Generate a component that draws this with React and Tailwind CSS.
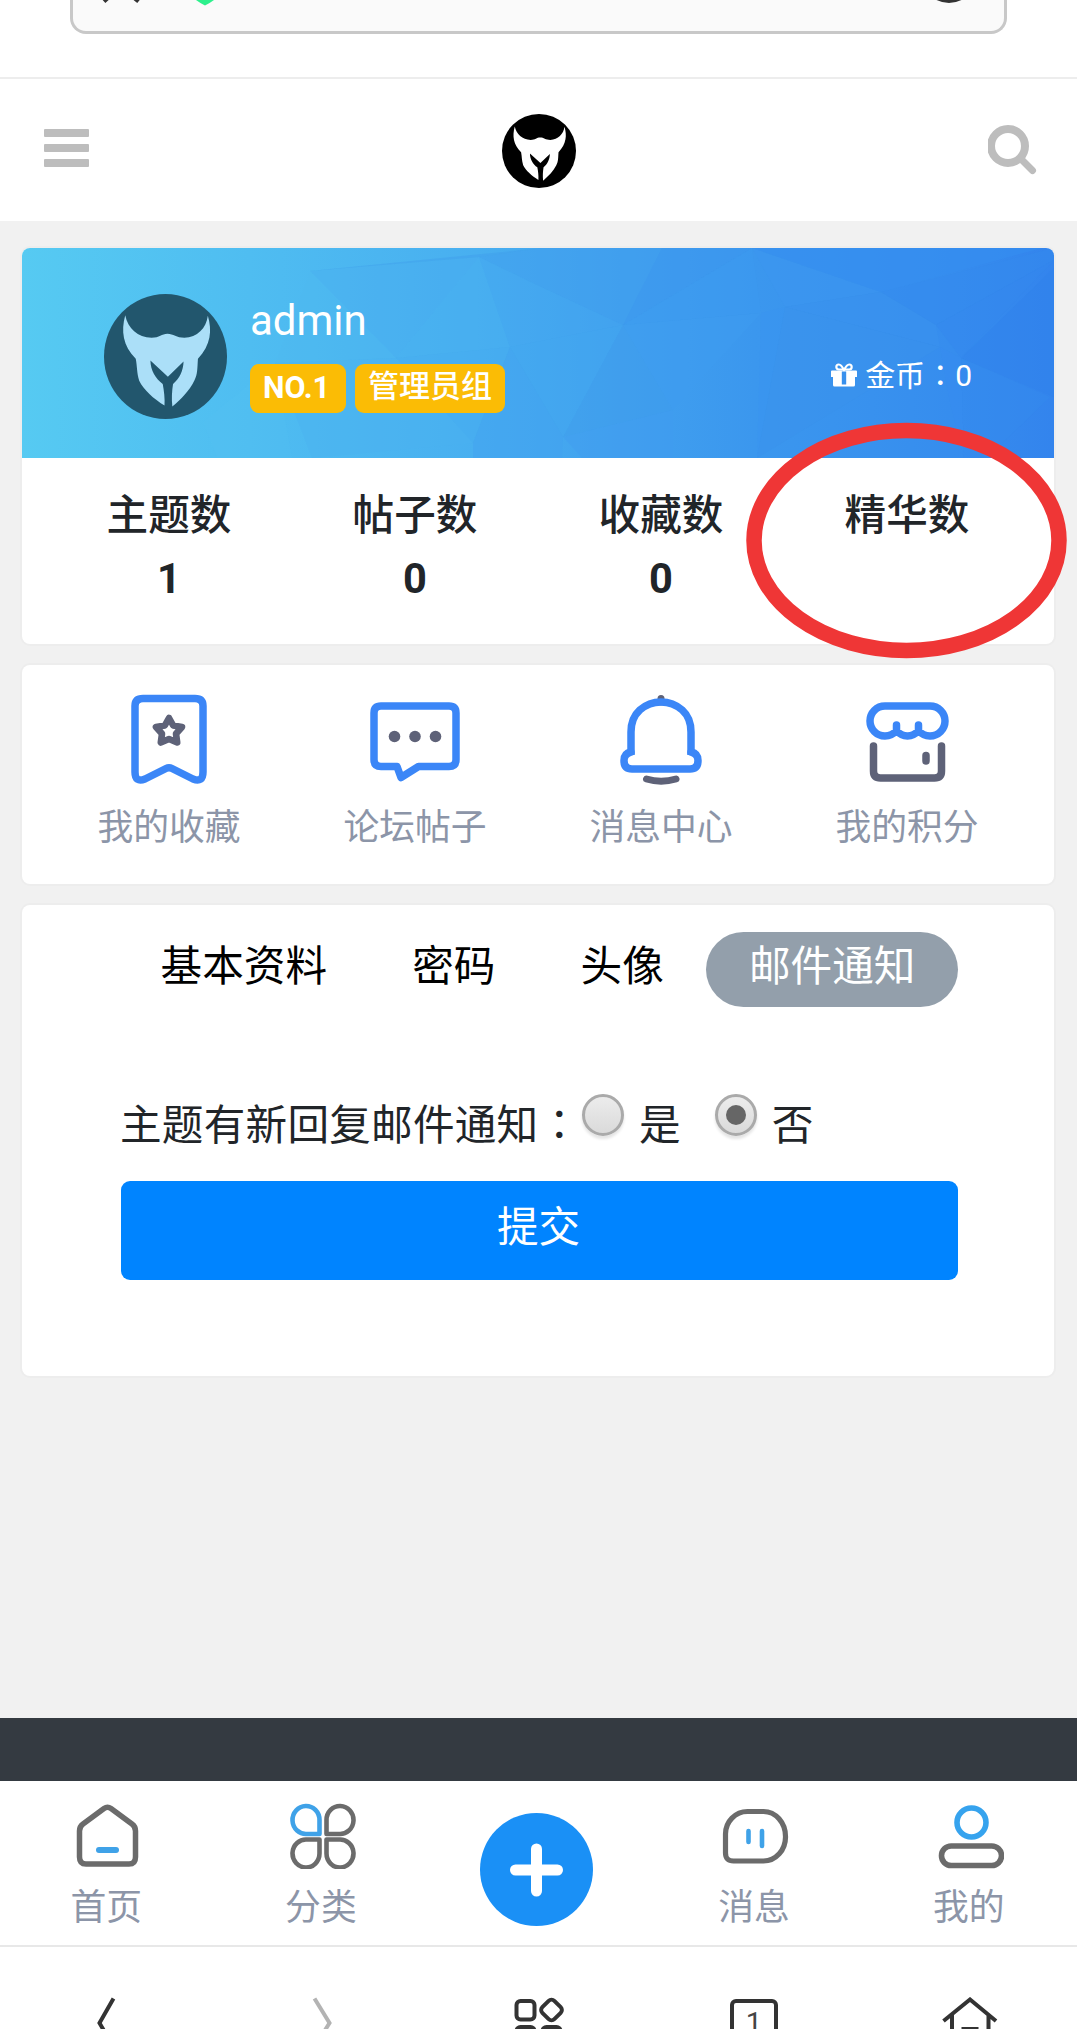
// src/pages/UserNoticeSettings.jsx
import React, { useState } from 'react';

const stats = [
  { label: '主题数', value: '1' },
  { label: '帖子数', value: '0' },
  { label: '收藏数', value: '0' },
  { label: '精华数', value: '' },
];

const tabs = ['基本资料', '密码', '头像', '邮件通知'];

// Low-poly facets of the profile banner
const facets = [
  { points: '288,23 457,9 374,110', fill: '#46a9ef', opacity: 0.25 },
  { points: '288,23 520,0 457,9', fill: '#3f9cea', opacity: 0.4 },
  { points: '457,9 520,0 640,0 601,77 515,37', fill: '#3f9eed', opacity: 0.5 },
  { points: '457,9 488,99 374,110', fill: '#49aef0', opacity: 0.4 },
  { points: '253,115 288,23 374,110', fill: '#50bbf2', opacity: 0.2 },
  { points: '253,115 374,110 451,195 290,210', fill: '#4ab2ef', opacity: 0.4 },
  { points: '181,174 253,115 270,210 195,210', fill: '#53c4f3', opacity: 0.2 },
  { points: '374,110 488,99 451,195', fill: '#46abef', opacity: 0.5 },
  { points: '457,9 515,37 601,77 488,99', fill: '#43a6f0', opacity: 0.4 },
  { points: '488,99 601,77 541,189', fill: '#42a5f0', opacity: 0.5 },
  { points: '488,99 541,189 540,210 451,210 451,195', fill: '#42a2f0', opacity: 0.5 },
  { points: '601,77 651,162 541,189', fill: '#3e9bec', opacity: 0.4 },
  { points: '640,0 730,0 601,77', fill: '#3b96ed', opacity: 0.5 },
  { points: '601,77 730,0 739,65', fill: '#3c99f0', opacity: 0.5 },
  { points: '601,77 739,65 651,162', fill: '#3e9cf0', opacity: 0.5 },
  { points: '541,189 651,162 651,210 560,210', fill: '#409cef', opacity: 0.4 },
  { points: '730,0 859,44 763,59', fill: '#3c95f0', opacity: 0.5 },
  { points: '730,0 1020,0 859,44', fill: '#358df0', opacity: 0.6 },
  { points: '739,65 763,59 735,210', fill: '#3a94ef', opacity: 0.4 },
  { points: '763,59 859,44 914,77 918,99', fill: '#3992ee', opacity: 0.5 },
  { points: '763,59 918,99 735,210', fill: '#3992ec', opacity: 0.5 },
  { points: '859,44 1032,0 1032,12 914,77', fill: '#3389ee', opacity: 0.5 },
  { points: '914,77 1032,12 939,110', fill: '#3387ee', opacity: 0.5 },
  { points: '918,99 939,110 942,210 928,155', fill: '#388df0', opacity: 0.4 },
  { points: '939,110 1032,20 1032,149', fill: '#3082ec', opacity: 0.5 },
  { points: '939,110 1028,149 965,210 942,210', fill: '#3489ee', opacity: 0.5 },
];

function BullLogo({ className, circle, face }) {
  return (
    <svg viewBox="0 0 124 124" preserveAspectRatio="none" className={className}>
      <circle cx="62" cy="62" r="62" fill={circle} />
      <path
        fill={face}
        d="M21.4 21C24 34 34 43 48 43.5C56 43.5 58 39.5 64 39.5C70 39.5 73 43.5 81 43.5C94 43 103 34 104.700 21.500C109 36 108 50 94.700 64.300C94 74 94.500 80 91 86C86 96 78 104 68.900 111.700C68 104 68.500 96 69.600 89.300C76 84 80 76 80.200 67L64.400 82L46.800 66C47 76 52 84 59.200 89.300C60.500 96 61.500 104 61 110.500C50 104 40 95 35.500 86C33 78 33.500 72 32 64.300C19 51 17 37 21.400 21Z"
      />
    </svg>
  );
}

function GiftIcon({ className }) {
  return (
    <svg width="26" height="24" viewBox="0 0 26 24" className={className}>
      <path d="M0 8.500Q0 7.500 1 7.500H25Q26 7.500 26 8.500V14H0ZM2 13H24V22Q24 23.500 22.500 23.500H3.500Q2 23.500 2 22Z" fill="currentColor" />
      <path d="M13 7C11 3 9.500 1.500 7.800 1.500C4.500 1.500 4.500 6.500 7.800 6.500H18.200C21.500 6.500 21.500 1.500 18.200 1.500C16.500 1.500 15 3 13 7Z" fill="none" stroke="currentColor" strokeWidth="2.200" />
      <path d="M10.800 8.500H15.200V21.500H10.800Z" fill="#3890ed" />
    </svg>
  );
}

function BookmarkIcon() {
  return (
    <svg width="76" height="90" viewBox="0 0 76 90" fill="none" strokeLinejoin="round">
      <path d="M4 12Q4 4.500 12 4.500H64Q72 4.500 72 12V78Q72 89 62 85L41 74.500Q38 73 35 74.500L14 85Q4 89 4 78Z" stroke="#3b86f7" strokeWidth="7.500" />
      <path d="M38 24L42.200 31.500L51 33L45 39.800L46.200 48.500L38 45L29.800 48.500L31 39.800L25 33L33.800 31.500Z" stroke="#5e6278" strokeWidth="6.600" />
    </svg>
  );
}

function ChatIcon() {
  return (
    <svg width="90" height="90" viewBox="0 0 90 90" fill="none" strokeLinejoin="round">
      <path d="M11 12H79Q86 12 86 19V65.500Q86 72.500 79 72.500H48.500L31 83.500L27 72.500H11Q4 72.500 4 65.500V19Q4 12 11 12Z" stroke="#3b86f7" strokeWidth="7.500" />
      <circle cx="24.500" cy="42.500" r="5.800" fill="#5e6278" />
      <circle cx="45" cy="42.500" r="5.800" fill="#5e6278" />
      <circle cx="65.500" cy="42.500" r="5.800" fill="#5e6278" />
    </svg>
  );
}

function BellIcon() {
  return (
    <svg width="82" height="91" viewBox="0 0 82 91" fill="none" strokeLinecap="round">
      <path d="M41 4.500V8" stroke="#5e6278" strokeWidth="7" />
      <path d="M11 61V38Q11 24 19.800 16Q29 8 41 8Q53 8 62.200 16Q71 24 71 38V61" stroke="#3b86f7" strokeWidth="7.500" strokeLinecap="butt" />
      <path d="M11 58Q4 59.500 4 66.500Q4 75 12 75H70Q78 75 78 66.500Q78 59.500 71 58" stroke="#3b86f7" strokeWidth="7.500" />
      <path d="M26.500 85Q41 89.500 56 85" stroke="#5e6278" strokeWidth="7" />
      <path d="M14 62H68" stroke="#fff" strokeWidth="1" />
    </svg>
  );
}

function ShopIcon() {
  return (
    <svg width="83" height="90" viewBox="0 0 83 90" fill="none" strokeLinecap="round">
      <path d="M7.500 52V77Q7.500 84 14.500 84H68.500Q75.500 84 75.500 77V52M60 61.500V67" stroke="#5e6278" strokeWidth="7.500" />
      <path d="M19 12H64A15 15 0 0 1 64 42Q57 42 52.500 36.500Q48 42 41.500 42Q35 42 30.500 36.500Q26 42 19 42A15 15 0 0 1 19 12ZM30.500 31V37M52.500 31V37" stroke="#3b86f7" strokeWidth="7.500" />
    </svg>
  );
}

function HomeIcon() {
  return (
    <svg width="68" height="66" viewBox="-0.500 0 68 66" fill="none" strokeLinecap="round" strokeLinejoin="round">
      <path d="M30.500 5.500Q34 3 37.500 5.500L58.500 21Q62 23.500 62 28V54Q62 61 55.500 61H12.500Q6 61 6 54V28Q6 23.500 9.500 21Z" stroke="#6b6b6b" strokeWidth="5.500" />
      <path d="M25.500 47H42.500" stroke="#3fa2e8" strokeWidth="6" />
    </svg>
  );
}

function CategoryIcon() {
  return (
    <svg width="68" height="66" viewBox="-1 -0.500 68 66" fill="none" strokeWidth="4.600" strokeLinejoin="round">
      <path d="M30.500 30.500H18A13.500 14 0 1 1 30.500 16.500Z" stroke="#3fa2e8" />
      <path d="M37.500 30.500H50A13.500 14 0 1 0 37.500 16.500Z" stroke="#6b6b6b" />
      <path d="M30.500 36H18A13.500 14 0 1 0 30.500 50Z" stroke="#6b6b6b" />
      <path d="M37.500 36H50A13.500 14 0 1 1 37.500 50Z" stroke="#6b6b6b" />
    </svg>
  );
}

function MessageIcon() {
  return (
    <svg width="68" height="66" viewBox="-0.500 -1 68 66" fill="none" strokeLinecap="round">
      <path d="M26 7.500H42A22 25 0 0 1 64 32.500A22 24 0 0 1 42 57H12Q4 57 4 49V30A22 22.500 0 0 1 26 7.500Z" stroke="#6b6b6b" strokeWidth="5.200" />
      <path d="M27 27V38M40.500 27V42" stroke="#3fa2e8" strokeWidth="4.600" />
    </svg>
  );
}

function UserIcon() {
  return (
    <svg width="68" height="66" viewBox="-1.500 0 68 66" fill="none">
      <circle cx="34" cy="19.500" r="14.500" stroke="#36a3ee" strokeWidth="5.600" />
      <rect x="4" y="43" width="60" height="19.500" rx="9.700" stroke="#6b6b6b" strokeWidth="5.600" />
    </svg>
  );
}

const shortcuts = [
  { label: '我的收藏', Icon: BookmarkIcon },
  { label: '论坛帖子', Icon: ChatIcon },
  { label: '消息中心', Icon: BellIcon },
  { label: '我的积分', Icon: ShopIcon },
];

function AddressBar() {
  return (
    <div className="h-[79px] border-b-2 border-[#ededed] px-[70px]">
      <div className="flex h-[34px] items-start overflow-hidden rounded-b-[16px] border-x-3 border-b-3 border-[#c8c8c8] bg-[#fafafa]">
        <svg width="930" height="10" viewBox="73 0 930 10">
          <path d="M104 1.500L109 -3M138.500 1.500L133 -3" stroke="#333" strokeWidth="4" />
          <path d="M196 0H214Q210 3 205 5.500Q200 3 196 0Z" fill="#2df08c" />
          <path d="M936 -2.500Q949 4.500 962 -2.500" stroke="#333" strokeWidth="4" fill="none" />
        </svg>
      </div>
    </div>
  );
}

function SiteHeader() {
  return (
    <header className="flex h-[142px] items-start justify-between bg-white pl-[44px] pr-[39px]">
      <button className="mt-[50px] flex w-[45px] flex-col gap-[7px]">
        <span className="h-2 rounded-[1px] bg-[#bdbdbd]" />
        <span className="h-2 rounded-[1px] bg-[#bdbdbd]" />
        <span className="h-2 rounded-[1px] bg-[#bdbdbd]" />
      </button>
      <BullLogo className="mt-[35px] size-[74px]" circle="#000" face="#fff" />
      <svg width="50" height="50" viewBox="0 0 50 50" fill="none" stroke="#bdbdbd" className="mt-[46px]">
        <circle cx="20" cy="21" r="17" strokeWidth="8" />
        <path d="M33 34L44.500 45.500" strokeWidth="7" strokeLinecap="round" />
      </svg>
    </header>
  );
}

function ProfileCard() {
  return (
    <section className="relative h-[396px] rounded-lg bg-white shadow-[0_0_0_2px_#ededed]">
      <div className="relative h-[210px] overflow-hidden rounded-t-lg bg-[linear-gradient(to_right,#56caf2,#4fbdf1_22%,#48aff0_44%,#41a1ef_58%,#3b97ee_71%,#368dee_90%,#3384ed)]">
        <svg viewBox="0 0 1032 210" preserveAspectRatio="none" className="absolute inset-0 size-full">
          {facets.map((facet) => (
            <polygon key={facet.points} points={facet.points} fill={facet.fill} opacity={facet.opacity} />
          ))}
        </svg>
        <div className="relative flex h-full items-start pl-[82px] pr-[82px] text-white">
          <BullLogo className="mt-[46px] h-[125px] w-[123px]" circle="#22566d" face="#abdff8" />
          <div className="ml-[23px] mt-[46px]">
            <div className="h-[50px] text-[42px] leading-[53px]">admin</div>
            <div className="mt-[20px] flex gap-[9px] text-[30.500px]">
              <span className="h-[49px] w-[96px] rounded-[9px] bg-[#fbbc05] pr-[3px] text-center font-bold leading-[47px]">NO.1</span>
              <span className="h-[49px] w-[150px] rounded-[9px] bg-[#fbbc05] text-center text-[31px] font-medium leading-[46px]">管理员组</span>
            </div>
          </div>
          <div className="ml-auto mt-[104px] flex text-[30px] leading-[47px]">
            <GiftIcon className="mr-[8px] mt-[11px]" />
            <span>金币</span>
            <span className="font-['Noto_Sans_CJK_TC',sans-serif] leading-[43px]">：</span>
            <span>0</span>
          </div>
        </div>
      </div>
      <div className="grid grid-cols-4 px-6 pt-[27px] text-center text-[41.600px] text-[#212529]">
        {stats.map((item) => (
          <div key={item.label}>
            <div className="h-[62px] font-medium leading-[62px]">{item.label}</div>
            <div className="h-[64px] font-bold leading-[64px]">{item.value}</div>
          </div>
        ))}
      </div>
      {/* Hand-drawn marker around the empty counter */}
      <svg width="322" height="238" viewBox="0 0 322 238" className="absolute left-[724px] top-[174px] z-10">
        <ellipse cx="160.500" cy="118.500" rx="152.500" ry="110" fill="none" stroke="#ef3636" strokeWidth="15.500" />
      </svg>
    </section>
  );
}

function ShortcutCard() {
  return (
    <section className="mt-[21px] grid h-[219px] grid-cols-4 rounded-lg bg-white px-6 pt-[29px] shadow-[0_0_0_2px_#ededed]">
      {shortcuts.map(({ label, Icon }) => (
        <a key={label} className="flex flex-col items-center">
          <div className="h-[91px]">
            <Icon />
          </div>
          <span className="mt-[16px] text-[35.800px] leading-[54px] text-[#8c95a8]">{label}</span>
        </a>
      ))}
    </section>
  );
}

function Radio({ checked, onClick }) {
  return (
    <button
      onClick={onClick}
      className="flex size-[42px] items-center justify-center rounded-full border-3 border-[#aaa] bg-linear-to-b from-[#ececec] to-[#dadada] shadow-[0_3px_3px_#e4e4e4]"
    >
      {checked && <span className="size-5 rounded-full bg-[#666]" />}
    </button>
  );
}

function SettingsCard() {
  const [active, setActive] = useState('邮件通知');
  const [notify, setNotify] = useState(false);

  return (
    <section className="mt-[21px] h-[471px] rounded-lg bg-white pl-[99px] pr-[96px] pt-[27px] text-[41.600px] shadow-[0_0_0_2px_#ededed]">
      <nav className="-ml-[3px] flex">
        {tabs.map((tab) => (
          <button
            key={tab}
            onClick={() => setActive(tab)}
            className={`h-[75px] rounded-full px-[42.600px] pb-[5px] leading-[70px] whitespace-nowrap ${
              active === tab ? 'bg-[#939fab] text-white' : 'text-black'
            }`}
          >
            {tab}
          </button>
        ))}
      </nav>
      <div className="mt-[87px] flex h-[62px] items-start leading-[63px] text-[#212529]">
        <span className="-ml-px tracking-[0.250px]">主题有新回复邮件通知</span>
        <span className="font-['Noto_Sans_CJK_TC',sans-serif] leading-[56px]">：</span>
        <div className="ml-[2px] flex">
          <Radio checked={notify} onClick={() => setNotify(true)} />
          <span className="ml-[15px]">是</span>
        </div>
        <div className="ml-[34px] flex">
          <Radio checked={!notify} onClick={() => setNotify(false)} />
          <span className="ml-[15px]">否</span>
        </div>
      </div>
      <button className="mt-[25px] h-[99px] w-full rounded-[9px] bg-[#0084ff] pb-[4px] pr-[2px] text-white">提交</button>
    </section>
  );
}

function NavItem({ label, Icon }) {
  return (
    <a className="flex flex-1 flex-col items-center pt-[22px]">
      <Icon />
      <span className="mt-[12px] pr-[2px] text-[35.800px] leading-[54px] text-[#8c95a8]">{label}</span>
    </a>
  );
}

function TabBar() {
  return (
    <nav className="flex h-[166px] border-b-2 border-[#e8e8e8] bg-white">
      <NavItem label="首页" Icon={HomeIcon} />
      <NavItem label="分类" Icon={CategoryIcon} />
      <div className="flex flex-1 justify-center pr-[4px] pt-[32px]">
        <svg width="113" height="113" viewBox="0 0 113 113">
          <circle cx="56.500" cy="56.500" r="56.500" fill="#1a90f6" />
          <path d="M56.500 36V78M35.500 57H77.500" stroke="#fff" strokeWidth="11" strokeLinecap="round" />
        </svg>
      </div>
      <NavItem label="消息" Icon={MessageIcon} />
      <NavItem label="我的" Icon={UserIcon} />
    </nav>
  );
}

function BrowserBar() {
  return (
    <div className="flex h-[82px] items-start overflow-hidden bg-white pt-[50px]">
      <div className="flex flex-1 justify-center">
        <svg width="60" height="60" viewBox="0 0 60 60" fill="none" stroke="#333" strokeWidth="4">
          <path d="M35.500 1.500L21.500 26L35.500 50" />
        </svg>
      </div>
      <div className="flex flex-1 justify-center">
        <svg width="60" height="60" viewBox="0 0 60 60" fill="none" stroke="#b3b3b3" strokeWidth="4">
          <path d="M21.500 1.500L36.500 26L21.500 50" />
        </svg>
      </div>
      <div className="flex flex-1 justify-center">
        <svg width="60" height="60" viewBox="0 0 60 60" fill="none" stroke="#333" strokeWidth="4">
          <rect x="7.500" y="4" width="18" height="18.500" rx="4" />
          <rect x="7.500" y="30" width="18" height="18.500" rx="4" />
          <rect x="33.500" y="30" width="18" height="18.500" rx="4" />
          <rect x="34" y="4.500" width="17" height="17" rx="4" transform="rotate(45 42.500 13)" />
        </svg>
      </div>
      <div className="flex flex-1 justify-center">
        <div className="mt-[2px] h-12 w-12 rounded-[6px] border-4 border-[#333] text-center text-[29px] leading-[40px] text-[#444]">1</div>
      </div>
      <div className="flex flex-1 justify-center">
        <svg width="60" height="60" viewBox="0 0 60 60" fill="none" stroke="#333" strokeWidth="4">
          <path d="M4.500 24L31 2.500L57 24M13 18V50H49.500V18M24.500 50V32H37.500V50" />
        </svg>
      </div>
    </div>
  );
}

export default function App() {
  return (
    <div className="flex h-[2029px] w-[1077px] flex-col overflow-hidden bg-white font-[Roboto,'Noto_Sans_CJK_SC',sans-serif]">
      <AddressBar />
      <SiteHeader />
      <main className="h-[1497px] bg-[#f1f1f1] pl-[22px] pr-[23px] pt-[27px]">
        <ProfileCard />
        <ShortcutCard />
        <SettingsCard />
      </main>
      <div className="h-[63px] bg-[#343a41]" />
      <TabBar />
      <BrowserBar />
    </div>
  );
}
